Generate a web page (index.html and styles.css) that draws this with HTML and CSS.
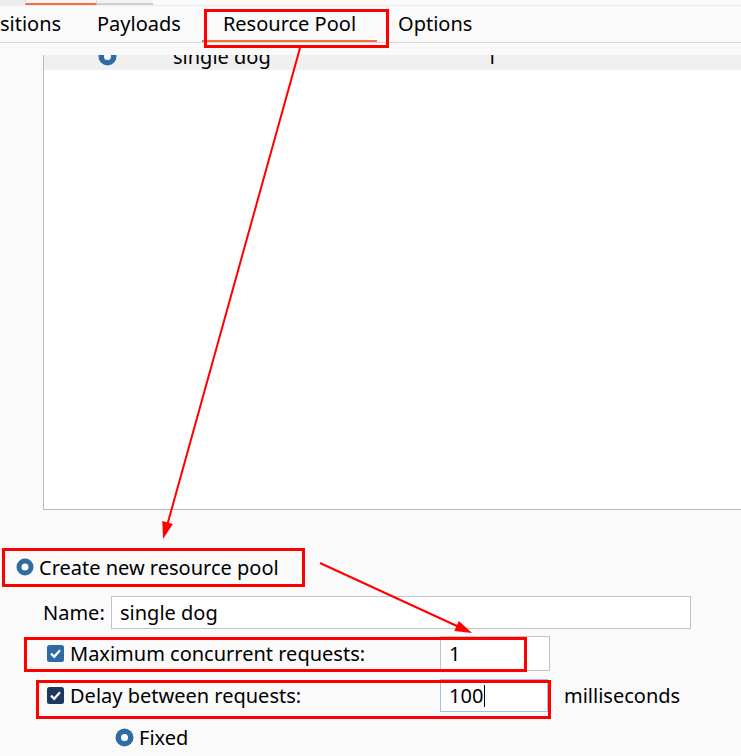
FILE: index.html
```html
<!DOCTYPE html>
<html>
<head>
<meta charset="utf-8">
<link rel="stylesheet" href="styles.css">
</head>
<body>
<div class="page">
  <div class="topstrip">
    <div class="ts-a"></div>
    <div class="ts-b"></div>
    <div class="ts-c"></div>
  </div>
  <div class="tabbar">
    <div class="tab tab-first">sitions</div>
    <div class="tab">Payloads</div>
    <div class="tab active">Resource Pool</div>
    <div class="tab">Options</div>
  </div>
  <div class="listwrap">
    <div class="listbox">
      <div class="row sel">
        <span class="row-radio"><svg width="19" height="19" viewBox="0 0 19 19"><circle cx="9.5" cy="9.5" r="9" fill="#2f6ca6"/><circle cx="9.5" cy="9.5" r="3.5" fill="#fff"/></svg></span>
        <span class="row-name">single dog</span>
        <span class="row-num">1</span>
      </div>
    </div>
  </div>
  <div class="pool">
    <div class="create-row">
      <svg class="radio" width="18" height="18" viewBox="0 0 18 18"><circle cx="9" cy="9" r="8.5" fill="#2f6ca6"/><circle cx="9" cy="9" r="3.5" fill="#fff"/></svg>
      <span>Create new resource pool</span>
    </div>
    <div class="name-row">
      <span class="name-label">Name:</span>
      <div class="field name-field">single dog</div>
    </div>
    <div class="opt-row max-row">
      <svg class="check" width="17" height="17" viewBox="0 0 17 17"><rect x="0" y="0" width="17" height="17" rx="2.5" fill="#2f6aa5"/><path d="M4 8.6 L7.2 11.8 L13 5.2" fill="none" stroke="#fff" stroke-width="2.2"/></svg>
      <span class="opt-label">Maximum concurrent requests:</span>
      <div class="field num-field">1</div>
    </div>
    <div class="opt-row delay-row">
      <svg class="check" width="17" height="17" viewBox="0 0 17 17"><rect x="0" y="0" width="17" height="17" rx="2.5" fill="#1c3a5e"/><path d="M4 8.6 L7.2 11.8 L13 5.2" fill="none" stroke="#fff" stroke-width="2.2"/></svg>
      <span class="opt-label">Delay between requests:</span>
      <div class="field num-field focused">100<span class="caret"></span></div>
      <span class="unit">milliseconds</span>
    </div>
    <div class="fixed-row">
      <svg class="radio" width="19" height="19" viewBox="0 0 19 19"><circle cx="9.5" cy="9.5" r="9" fill="#2f6ca6"/><circle cx="9.5" cy="9.5" r="3.5" fill="#fff"/></svg>
      <span>Fixed</span>
    </div>
  </div>
  <svg class="annot" width="741" height="756" viewBox="0 0 741 756">
    <g fill="none" stroke="#ff0000" stroke-width="3">
      <rect x="205.5" y="10.5" width="182" height="36"/>
      <rect x="3.5" y="549.5" width="300" height="36"/>
      <rect x="25.5" y="638.5" width="500" height="32"/>
      <rect x="37.5" y="681.5" width="512" height="36"/>
    </g>
    <g stroke="#ff0000" stroke-width="2" fill="none">
      <line x1="300" y1="48" x2="167.5" y2="524"/>
      <line x1="320" y1="563" x2="458" y2="626.5"/>
    </g>
    <g fill="#ff0000">
      <polygon points="163,539 172.9,524.1 162.3,521.1"/>
      <polygon points="472,633 454.3,630.9 458.9,620.9"/>
    </g>
  </svg>
</div>
</body>
</html>
```
FILE: styles.css
```css
html, body {
  margin: 0;
  padding: 0;
}
body {
  background: #fafafa;
  font-family: "Noto Sans", "Open Sans", sans-serif;
  font-size: 20px;
  color: #000;
}
.page {
  position: relative;
  width: 741px;
  height: 756px;
  overflow: hidden;
}
.topstrip {
  display: flex;
  height: 5px;
  background: #fafafa;
}
.ts-a {
  width: 25px;
  background: #ececec;
}
.ts-b {
  width: 72px;
  border-left: 1px solid #d8d8d8;
  border-right: 1px solid #d8d8d8;
  border-bottom: 2px solid #ff6a3a;
  background: #f4f4f4;
  box-sizing: border-box;
}
.ts-c {
  width: 56px;
  border-bottom: 2px solid #d0d0d0;
  background: #f2f2f2;
  box-sizing: border-box;
}
.tabbar {
  display: flex;
  height: 38px;
  box-sizing: border-box;
  border-top: 1px solid #ececec;
  border-bottom: 1px solid #d9d9d9;
  background: #fafafa;
  align-items: stretch;
}
.tab {
  padding: 0 21px;
  display: flex;
  align-items: center;
  box-sizing: border-box;
  border-bottom: 2px solid transparent;
  padding-top: 1px;
  white-space: nowrap;
}
.tab-first {
  padding-left: 0;
  padding-right: 0;
  width: 76px;
}
.tab.active {
  border-bottom-color: #ff6a3a;
}
.listwrap {
  height: 467px;
  padding-top: 12px;
  box-sizing: border-box;
}
.listbox {
  margin-left: 43px;
  height: 455px;
  background: #fff;
  border-left: 1px solid #b9b9b9;
  border-bottom: 1px solid #b9b9b9;
  overflow: hidden;
  box-sizing: border-box;
}
.row {
  display: flex;
  align-items: center;
  height: 28px;
  margin-top: -13px;
}
.row.sel {
  background: #f0f0f0;
}
.row-radio {
  margin-left: 54px;
  width: 19px;
  height: 19px;
  display: flex;
}
.row-name {
  margin-left: 56px;
  width: 313px;
}
.pool {
  padding-top: 40px;
}
.create-row {
  display: flex;
  align-items: center;
  height: 34px;
  padding-left: 16px;
  gap: 5px;
}
.name-row {
  display: flex;
  align-items: center;
  margin-top: 12px;
  height: 33px;
  padding-left: 43px;
}
.name-label {
  width: 68px;
}
.field {
  box-sizing: border-box;
  background: #fff;
  border: 1px solid #c4c4c4;
  display: flex;
  align-items: center;
  padding-left: 8px;
}
.name-field {
  width: 580px;
  height: 33px;
}
.opt-row {
  display: grid;
  grid-template-columns: 17px 364px 110px auto;
  column-gap: 6px;
  align-items: center;
  padding-left: 47px;
}
.max-row {
  margin-top: 7px;
  height: 35px;
}
.max-row .field {
  height: 35px;
}
.delay-row {
  margin-top: 8px;
  height: 33px;
}
.delay-row .field {
  height: 33px;
}
.field.focused {
  border-color: #9dc1e8;
  width: 108px;
}
.caret {
  display: inline-block;
  width: 1px;
  height: 22px;
  background: #000;
  margin-left: 1px;
}
.unit {
  margin-left: 8px;
}
.fixed-row {
  display: flex;
  align-items: center;
  margin-top: 15px;
  height: 20px;
  padding-left: 115px;
  gap: 5px;
}
.annot {
  position: absolute;
  left: 0;
  top: 0;
  pointer-events: none;
}
```
